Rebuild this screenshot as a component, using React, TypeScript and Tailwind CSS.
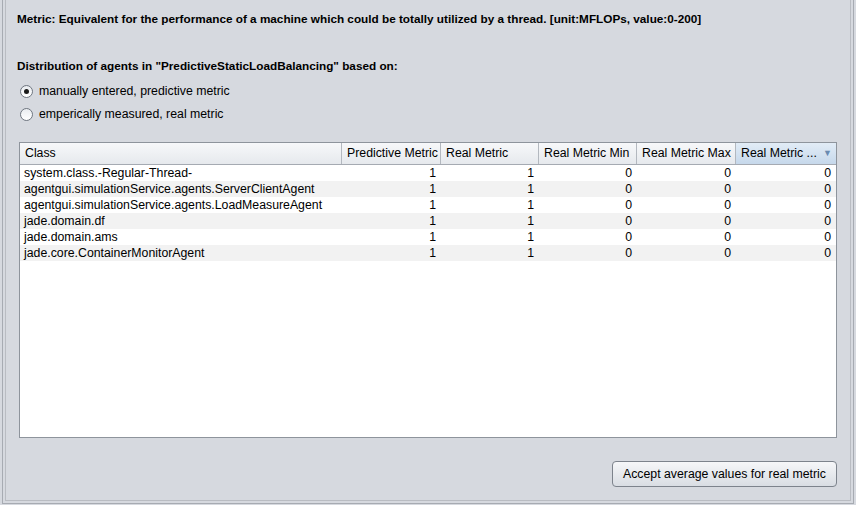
import React from "react";

const rows = [
  "system.class.-Regular-Thread-",
  "agentgui.simulationService.agents.ServerClientAgent",
  "agentgui.simulationService.agents.LoadMeasureAgent",
  "jade.domain.df",
  "jade.domain.ams",
  "jade.core.ContainerMonitorAgent",
];

const cols = [
  { label: "Class", w: "w-[322px]" },
  { label: "Predictive Metric", w: "w-[99px]" },
  { label: "Real Metric", w: "w-[98px]" },
  { label: "Real Metric Min", w: "w-[98px]" },
  { label: "Real Metric Max", w: "w-[99px]" },
];

const Radio = ({ checked, label }: { checked?: boolean; label: string }) => (
  <div className="flex items-center h-[23px]">
    <div className="ml-[3px] w-[13px] h-[13px] rounded-full border border-[#6f7680] bg-gradient-to-b from-[#e9ecf0] to-white flex items-center justify-center">
      {checked && <div className="w-[5px] h-[5px] rounded-full bg-[#1a1a1a]" />}
    </div>
    <span className="ml-[6px]">{label}</span>
  </div>
);

export default function App() {
  return (
    <div
      className="w-[856px] h-[505px] bg-[#d6d9df] text-[12.3px] text-black overflow-hidden"
      style={{ fontFamily: '"Liberation Sans", Arial, sans-serif' }}
    >
      <div className="h-full pl-[2px] pr-[2px] pb-[1px]">
        <div className="h-full border-l border-r border-b border-[#a7abb2] pl-[2px] pr-[2px] pb-[2px]">
          <div className="h-full border-l border-r border-b border-[#b9bcc2] flex flex-col pl-[11px] pr-[13px]">
            <div className="mt-[11px] font-bold text-[11.75px] h-[16px] leading-[16px] whitespace-nowrap">
              Metric: Equivalent for the performance of a machine which could be totally utilized by a thread. [unit:MFLOPs, value:0-200]
            </div>
            <div className="mt-[31px] font-bold text-[11.75px] h-[16px] leading-[16px] whitespace-nowrap">
              Distribution of agents in "PredictiveStaticLoadBalancing" based on:
            </div>
            <div className="mt-[6px]">
              <Radio checked label="manually entered, predictive metric" />
              <Radio label="emperically measured, real metric" />
            </div>
            <div className="mt-[16px] ml-[2px] h-[296px] border border-[#8e949c] bg-white flex flex-col">
              <div className="flex h-[22px] border-b border-[#a5aab2] bg-gradient-to-b from-[#f7f8fa] to-[#e6e9ed]">
                {cols.map((c) => (
                  <div
                    key={c.label}
                    className={`${c.w} border-r border-[#b3b8bf] flex items-center pl-[5px]`}
                  >
                    {c.label}
                  </div>
                ))}
                <div className="flex-1 flex items-center pl-[5px] pr-[4px] bg-gradient-to-b from-[#e2ecf6] to-[#c6d8eb]">
                  <span className="flex-1">Real Metric ...</span>
                  <span className="text-[9px] text-[#6a8bb0]">▼</span>
                </div>
              </div>
              {rows.map((r, i) => (
                <div key={r} className={`flex h-[16px] leading-[16px] ${i % 2 === 1 ? "bg-[#f2f2f2]" : "bg-white"}`}>
                  <div className="w-[322px] pl-[4px]">{r}</div>
                  <div className="w-[99px] text-right pr-[5px]">1</div>
                  <div className="w-[98px] text-right pr-[5px]">1</div>
                  <div className="w-[98px] text-right pr-[5px]">0</div>
                  <div className="w-[99px] text-right pr-[5px]">0</div>
                  <div className="flex-1 text-right pr-[5px]">0</div>
                </div>
              ))}
            </div>
            <div className="flex justify-end mt-[23px]">
              <button className="w-[225px] h-[26px] rounded-[4px] border border-[#7d838c] bg-gradient-to-b from-[#f6f7f9] to-[#d9dde3]">
                Accept average values for real metric
              </button>
            </div>
          </div>
        </div>
      </div>
    </div>
  );
}
